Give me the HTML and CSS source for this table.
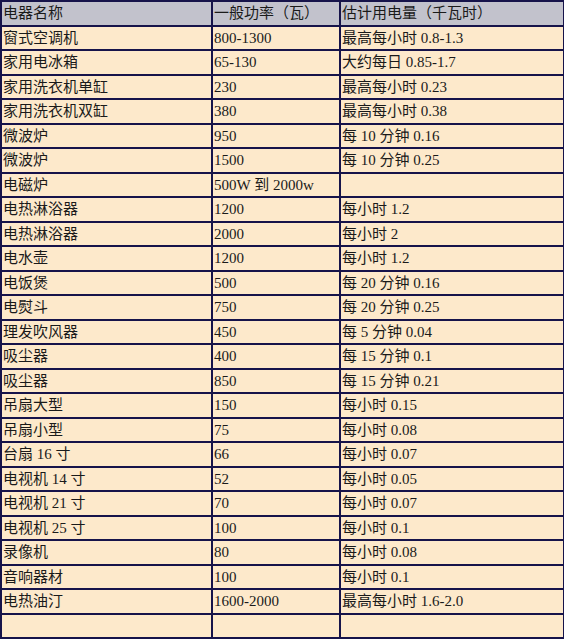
FILE: index.html
```html
<!DOCTYPE html>
<html lang="zh">
<head>
<meta charset="utf-8">
<title>电器耗电量</title>
<link rel="stylesheet" href="styles.css">
</head>
<body>
<table class="power">
<colgroup><col class="c1"><col class="c2"><col class="c3"></colgroup>
<thead>
<tr><th>电器名称</th><th>一般功率（瓦）</th><th>估计用电量（千瓦时）</th></tr>
</thead>
<tbody>
<tr><td>窗式空调机</td><td>800-1300</td><td>最高每小时 0.8-1.3</td></tr>
<tr><td>家用电冰箱</td><td>65-130</td><td>大约每日 0.85-1.7</td></tr>
<tr><td>家用洗衣机单缸</td><td>230</td><td>最高每小时 0.23</td></tr>
<tr><td>家用洗衣机双缸</td><td>380</td><td>最高每小时 0.38</td></tr>
<tr><td>微波炉</td><td>950</td><td>每 10 分钟 0.16</td></tr>
<tr><td>微波炉</td><td>1500</td><td>每 10 分钟 0.25</td></tr>
<tr><td>电磁炉</td><td>500W 到 2000w</td><td></td></tr>
<tr><td>电热淋浴器</td><td>1200</td><td>每小时 1.2</td></tr>
<tr><td>电热淋浴器</td><td>2000</td><td>每小时 2</td></tr>
<tr><td>电水壶</td><td>1200</td><td>每小时 1.2</td></tr>
<tr><td>电饭煲</td><td>500</td><td>每 20 分钟 0.16</td></tr>
<tr><td>电熨斗</td><td>750</td><td>每 20 分钟 0.25</td></tr>
<tr><td>理发吹风器</td><td>450</td><td>每 5 分钟 0.04</td></tr>
<tr><td>吸尘器</td><td>400</td><td>每 15 分钟 0.1</td></tr>
<tr><td>吸尘器</td><td>850</td><td>每 15 分钟 0.21</td></tr>
<tr><td>吊扇大型</td><td>150</td><td>每小时 0.15</td></tr>
<tr><td>吊扇小型</td><td>75</td><td>每小时 0.08</td></tr>
<tr><td>台扇 16 寸</td><td>66</td><td>每小时 0.07</td></tr>
<tr><td>电视机 14 寸</td><td>52</td><td>每小时 0.05</td></tr>
<tr><td>电视机 21 寸</td><td>70</td><td>每小时 0.07</td></tr>
<tr><td>电视机 25 寸</td><td>100</td><td>每小时 0.1</td></tr>
<tr><td>录像机</td><td>80</td><td>每小时 0.08</td></tr>
<tr><td>音响器材</td><td>100</td><td>每小时 0.1</td></tr>
<tr><td>电热油汀</td><td>1600-2000</td><td>最高每小时 1.6-2.0</td></tr>
<tr><td></td><td></td><td></td></tr>
</tbody>
</table>
</body>
</html>
```
FILE: styles.css
```css
html, body {
  margin: 0;
  padding: 0;
  background: #ffffff;
}
.power {
  border-collapse: collapse;
  width: 563px;
  table-layout: fixed;
  font-family: "Liberation Serif", "Noto Sans CJK SC", serif;
  font-size: 15px;
  color: #1a1a1a;
}
.c1 { width: 211px; }
.c2 { width: 128px; }
.c3 { width: 224px; }
.power tr { height: 24.5px; }
.power th, .power td {
  border: 2px solid #16134a;
  padding: 0 0 0 1px;
  text-align: left;
  vertical-align: middle;
  font-weight: normal;
  white-space: nowrap;
  line-height: 18px;
}
.power th { background: #c2c2cc; }
.power td { background: #fde9cb; }
```
